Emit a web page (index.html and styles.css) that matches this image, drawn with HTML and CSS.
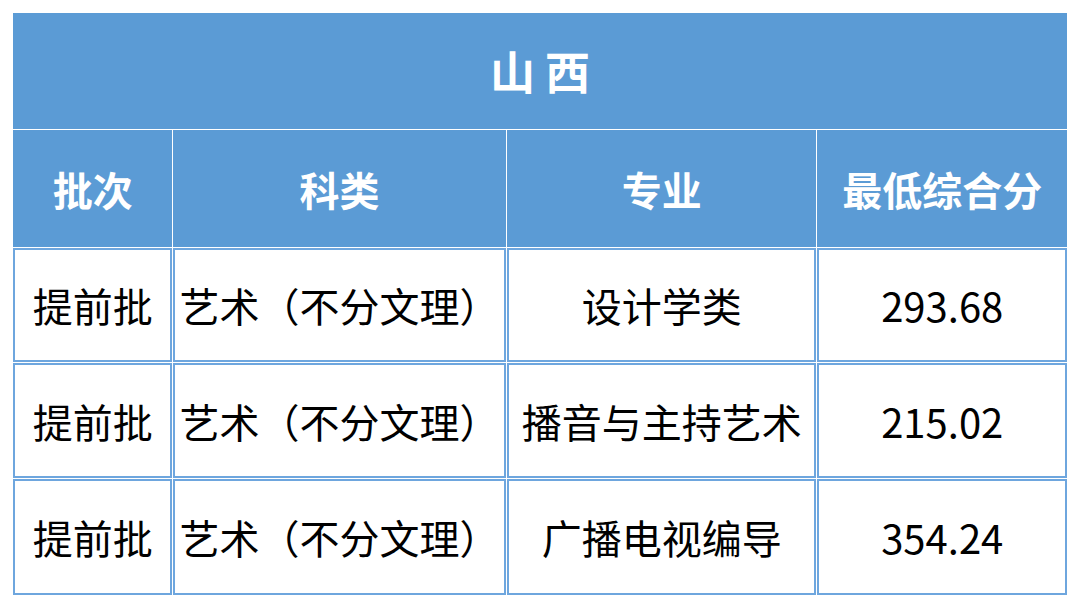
FILE: index.html
```html
<!DOCTYPE html>
<html lang="zh-CN">
<head>
<meta charset="utf-8">
<title>山西</title>
<link rel="stylesheet" href="styles.css">
</head>
<body>
<table class="score-table">
  <colgroup>
    <col class="c1"><col class="c2"><col class="c3"><col class="c4">
  </colgroup>
  <tr class="row-title">
    <td class="title" colspan="4">山 西</td>
  </tr>
  <tr class="row-head">
    <td class="head">批次</td>
    <td class="head">科类</td>
    <td class="head">专业</td>
    <td class="head">最低综合分</td>
  </tr>
  <tr class="row-a">
    <td>提前批</td>
    <td>艺术（不分文理）</td>
    <td>设计学类</td>
    <td>293.68</td>
  </tr>
  <tr class="row-b">
    <td>提前批</td>
    <td>艺术（不分文理）</td>
    <td>播音与主持艺术</td>
    <td>215.02</td>
  </tr>
  <tr class="row-c">
    <td>提前批</td>
    <td>艺术（不分文理）</td>
    <td>广播电视编导</td>
    <td>354.24</td>
  </tr>
</table>
</body>
</html>
```
FILE: styles.css
```css
html, body {
  margin: 0;
  padding: 0;
  background: #ffffff;
}

body {
  padding: 12px 0 0 12px;
  font-family: "Noto Sans CJK SC", "Noto Sans", sans-serif;
}

.score-table {
  table-layout: fixed;
  width: 1056px;
  border-collapse: separate;
  border-spacing: 1px;
  border: 0;
}

.c1 { width: 159px; }
.c2 { width: 332px; }
.c3 { width: 309px; }
.c4 { width: 249px; }

.score-table td {
  border: 2px solid #6ea6de;
  padding: 0;
  text-align: center;
  vertical-align: middle;
  white-space: nowrap;
  font-size: 40px;
  color: #000000;
  line-height: 1;
}

.row-title { height: 116px; }
.row-head { height: 117px; }
.row-a { height: 114px; }
.row-b { height: 115px; }
.row-c { height: 116px; }

.score-table td.title {
  background: #5b9bd5;
  border-color: #5b9bd5;
  color: #ffffff;
  font-weight: 700;
  font-size: 45px;
  padding-bottom: 2px;
}

.score-table td.head {
  background: #5b9bd5;
  border-color: #5b9bd5;
  color: #ffffff;
  font-weight: 700;
  font-size: 40px;
}
```
